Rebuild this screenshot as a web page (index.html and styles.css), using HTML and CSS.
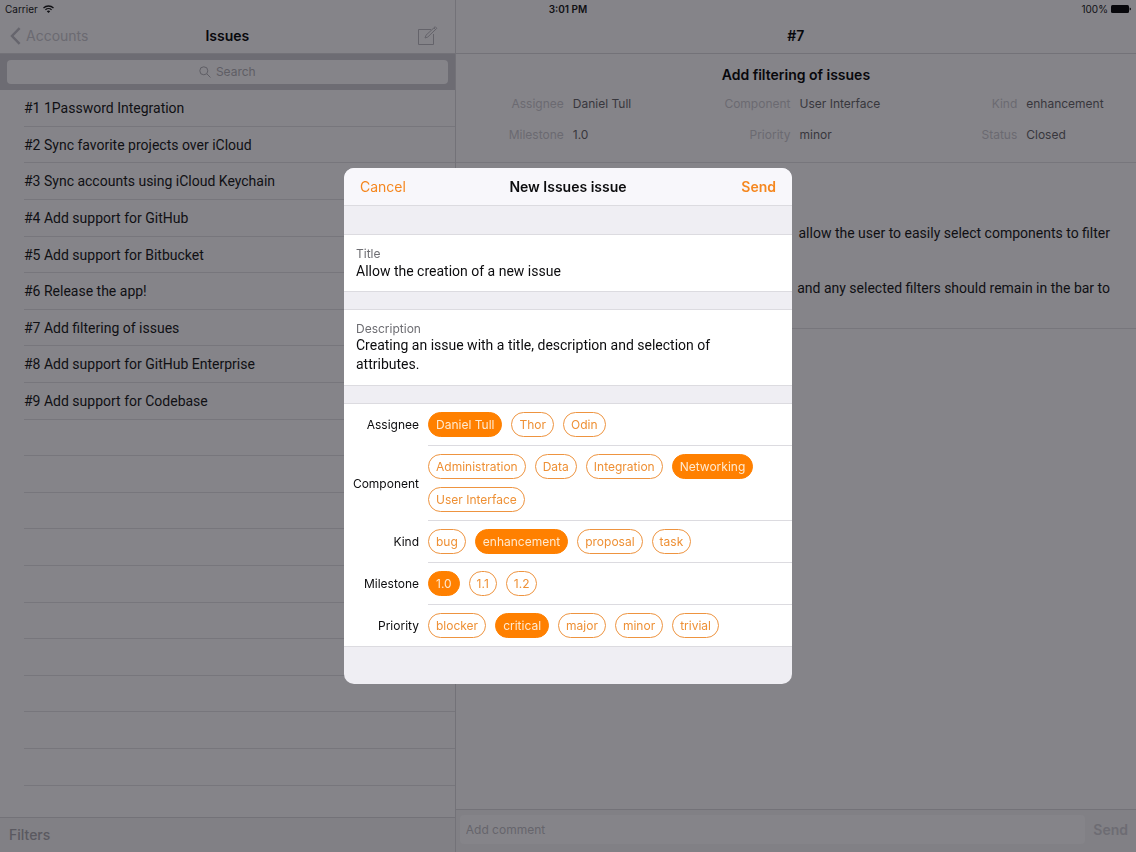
FILE: index.html
```html
<!DOCTYPE html>
<html lang="en">
<head>
    <meta charset="UTF-8">
    <meta name="viewport" content="width=device-width, initial-scale=1.0">
    <title>Issues</title>
    <link rel="stylesheet" href="styles.css">
</head>
<body>
    <div class="app">
        <!-- Status Bar -->
        <div class="status-bar">
            <span class="carrier">Carrier
                <svg width="11" height="8" viewBox="0 0 22 16" fill="none" stroke="#101014" stroke-width="2.6">
                    <path d="M1 6a14.5 14.5 0 0 1 20 0"/>
                    <path d="M4.8 9.8a9 9 0 0 1 12.4 0"/>
                    <path d="M11 16l-3.4-3.6a5 5 0 0 1 6.8 0z" fill="#101014" stroke="none"/>
                </svg>
            </span>
            <strong>3:01 PM</strong>
            <span class="battery">100%
                <svg width="20" height="8" viewBox="0 0 20 8" fill="#08080c">
                    <rect width="18" height="8" rx="1.5"/>
                    <path d="M18.6 2.6q1.4.3 1.4 1.4t-1.4 1.4z"/>
                </svg>
            </span>
        </div>

        <!-- Issue List -->
        <section class="sidebar">
            <header class="navbar">
                <a class="back" href="#">
                    <svg width="11" height="18" viewBox="0 0 11 18" fill="none" stroke="#66656d" stroke-width="2.4">
                        <path d="M9.6 1.2L2 9l7.6 7.8"/>
                    </svg>
                    Accounts
                </a>
                <h1>Issues</h1>
                <button class="compose" aria-label="New issue">
                    <svg width="20" height="20" viewBox="0 0 20 20" fill="none" stroke="#64636a" stroke-width="1">
                        <path d="M13 3.500H.500v15h15V8"/>
                        <path d="M7 12l1-2.800L17.200.700l1.600 1.600-9 8.700zM16 2l1.600 1.600"/>
                    </svg>
                </button>
            </header>
            <div class="search-bar">
                <label class="search">
                    <svg width="12" height="12" viewBox="0 0 12 12" fill="none" stroke="#5f5e65">
                        <circle cx="4.800" cy="4.800" r="4"/>
                        <path d="M7.800 7.800l3.700 3.700"/>
                    </svg>
                    <input type="text" placeholder="Search" aria-label="Search">
                </label>
            </div>
            <ul class="issues">
                <li>#1 1Password Integration</li>
                <li>#2 Sync favorite projects over iCloud</li>
                <li>#3 Sync accounts using iCloud Keychain</li>
                <li>#4 Add support for GitHub</li>
                <li>#5 Add support for Bitbucket</li>
                <li>#6 Release the app!</li>
                <li>#7 Add filtering of issues</li>
                <li>#8 Add support for GitHub Enterprise</li>
                <li>#9 Add support for Codebase</li>
                <li></li>
                <li></li>
                <li></li>
                <li></li>
                <li></li>
                <li></li>
                <li></li>
                <li></li>
                <li></li>
                <li></li>
            </ul>
            <footer class="toolbar">
                <button class="filters">Filters</button>
            </footer>
        </section>

        <!-- Issue Detail -->
        <main class="detail">
            <header class="navbar">
                <h1>#7</h1>
            </header>
            <div class="summary">
                <h2>Add filtering of issues</h2>
                <dl class="attributes">
                    <div><dt>Assignee</dt><dd>Daniel Tull</dd></div>
                    <div><dt>Component</dt><dd>User Interface</dd></div>
                    <div><dt>Kind</dt><dd>enhancement</dd></div>
                    <div><dt>Milestone</dt><dd>1.0</dd></div>
                    <div><dt>Priority</dt><dd>minor</dd></div>
                    <div><dt>Status</dt><dd>Closed</dd></div>
                </dl>
            </div>
            <div class="content">
                <p>allow the user to easily select components to filter</p>
                <p>and any selected filters should remain in the bar to</p>
            </div>
            <form class="comment-bar">
                <input type="text" placeholder="Add comment" aria-label="Add comment">
                <button type="button">Send</button>
            </form>
        </main>
    </div>

    <!-- New Issue Dialog -->
    <div class="overlay">
        <form class="dialog" role="dialog" aria-labelledby="dialog-title">
            <header class="dialog-header">
                <button type="button">Cancel</button>
                <h2 id="dialog-title">New Issues issue</h2>
                <button type="button" class="send">Send</button>
            </header>
            <div class="field">
                <label for="title">Title</label>
                <input type="text" id="title" value="Allow the creation of a new issue">
            </div>
            <div class="field">
                <label for="description">Description</label>
                <textarea id="description" rows="2">Creating an issue with a title, description and selection of attributes.</textarea>
            </div>
            <div class="options">
                <div class="option" role="radiogroup" aria-labelledby="assignee">
                    <span class="option-name" id="assignee">Assignee</span>
                    <div class="chips">
                        <label><input type="radio" name="assignee" checked>Daniel Tull</label>
                        <label><input type="radio" name="assignee">Thor</label>
                        <label><input type="radio" name="assignee">Odin</label>
                    </div>
                </div>
                <div class="option" role="radiogroup" aria-labelledby="component">
                    <span class="option-name" id="component">Component</span>
                    <div class="chips">
                        <label><input type="radio" name="component">Administration</label>
                        <label><input type="radio" name="component">Data</label>
                        <label><input type="radio" name="component">Integration</label>
                        <label><input type="radio" name="component" checked>Networking</label>
                        <label><input type="radio" name="component">User Interface</label>
                    </div>
                </div>
                <div class="option" role="radiogroup" aria-labelledby="kind">
                    <span class="option-name" id="kind">Kind</span>
                    <div class="chips">
                        <label><input type="radio" name="kind">bug</label>
                        <label><input type="radio" name="kind" checked>enhancement</label>
                        <label><input type="radio" name="kind">proposal</label>
                        <label><input type="radio" name="kind">task</label>
                    </div>
                </div>
                <div class="option" role="radiogroup" aria-labelledby="milestone">
                    <span class="option-name" id="milestone">Milestone</span>
                    <div class="chips">
                        <label><input type="radio" name="milestone" checked>1.0</label>
                        <label><input type="radio" name="milestone">1.1</label>
                        <label><input type="radio" name="milestone">1.2</label>
                    </div>
                </div>
                <div class="option" role="radiogroup" aria-labelledby="priority">
                    <span class="option-name" id="priority">Priority</span>
                    <div class="chips">
                        <label><input type="radio" name="priority">blocker</label>
                        <label><input type="radio" name="priority" checked>critical</label>
                        <label><input type="radio" name="priority">major</label>
                        <label><input type="radio" name="priority">minor</label>
                        <label><input type="radio" name="priority">trivial</label>
                    </div>
                </div>
            </div>
        </form>
    </div>
</body>
</html>
```
FILE: styles.css
```css
* {
    box-sizing: border-box;
}

body {
    margin: 0;
    background-color: #858489;
    color: #101014;
    font-family: Inter, "Liberation Sans", sans-serif;
    font-size: 14px;
    line-height: 18px;
}

h1, h2, p, ul, dl, dd {
    margin: 0;
    padding: 0;
}

h1, h2 {
    font-size: 14px;
    font-weight: 600;
    text-align: center;
}

button, input, textarea {
    font: inherit;
    color: inherit;
    background: none;
    border: none;
    margin: 0;
    padding: 0;
    outline: none;
}

button {
    cursor: pointer;
}

svg {
    display: block;
}

.app {
    position: relative;
    display: grid;
    grid-template-columns: 67fr 100fr;
    height: 100vh;
    overflow: hidden;
}

/* Status Bar */
.status-bar {
    position: absolute;
    top: 0;
    left: 0;
    right: 0;
    display: grid;
    grid-template-columns: 1fr auto 1fr;
    padding: 0 5px;
    font-size: 10px;
}

.status-bar strong {
    font-weight: 600;
}

.carrier, .battery {
    display: flex;
    align-items: center;
    gap: 5px;
}

.battery {
    justify-content: flex-end;
    gap: 3px;
}

/* Panes */
.sidebar, .detail {
    display: flex;
    flex-direction: column;
    min-width: 0;
    min-height: 0;
    padding-top: 18px;
}

.sidebar {
    border-right: 1px solid #737278;
}

.navbar {
    display: grid;
    grid-template-columns: 1fr auto 1fr;
    align-items: center;
    flex: none;
    height: 36px;
    padding: 0 10px;
    border-bottom: 1px solid #737278;
    color: #08080c;
}

.navbar h1 {
    grid-column: 2;
}

.back {
    display: flex;
    align-items: center;
    gap: 5px;
    color: #6b6a71;
    text-decoration: none;
}

.compose {
    justify-self: end;
    margin-right: 7px;
}

/* Search */
.search-bar {
    flex: none;
    padding: 6px 7px;
    background-color: #6d6c73;
}

.search {
    display: flex;
    align-items: center;
    justify-content: center;
    gap: 5px;
    height: 24px;
    border-radius: 4px;
    background-color: #858489;
    font-size: 12px;
}

.search input {
    width: 40px;
}

.search input::placeholder {
    color: #5f5e65;
    opacity: 1;
}

/* Issue List */
.issues {
    flex: 1;
    min-height: 0;
    overflow: hidden;
    padding-left: 24px;
    list-style: none;
}

.issues li {
    display: flex;
    align-items: center;
    height: 37px;
    border-bottom: 1px solid #77767c;
}

.issues li:nth-child(5n + 2), .issues li:nth-child(5n) {
    height: 36px;
}

.issues, .content, .field input, .field textarea {
    font-family: Roboto, "Liberation Sans", sans-serif;
}

.toolbar {
    flex: none;
    padding: 8px 9px;
    border-top: 1px solid #737278;
    background-color: #818085;
}

.filters {
    color: #5a5960;
    font-weight: 500;
}

/* Issue Detail */
.summary {
    flex: none;
    padding: 12px 0 18px;
    border-bottom: 1px solid #77767c;
}

.summary h2 {
    color: #08080c;
}

.attributes {
    display: grid;
    grid-template-columns: repeat(3, 1fr);
    row-gap: 13px;
    margin-top: 11px;
    font-size: 12px;
}

.attributes div {
    display: grid;
    grid-template-columns: 108px 1fr;
    column-gap: 9px;
    white-space: nowrap;
}

.attributes dt {
    color: #6b6a71;
    text-align: right;
}

.attributes dd {
    color: #38373d;
}

.content {
    display: grid;
    row-gap: 37px;
    padding: 61px 26px 31px;
    border-bottom: 1px solid #77767c;
    text-align: right;
}

.comment-bar {
    display: flex;
    gap: 8px;
    margin-top: auto;
    padding: 5px 8px 8px 4px;
    border-top: 1px solid #737278;
    background-color: #818085;
}

.comment-bar input {
    flex: 1;
    min-width: 0;
    height: 29px;
    padding: 0 6px;
    border-radius: 4px;
    background-color: #858489;
    font-size: 12px;
}

.comment-bar input::placeholder {
    color: #66656c;
    opacity: 1;
}

.comment-bar button {
    color: #6d6c73;
    font-weight: 600;
}

/* New Issue Dialog */
.overlay {
    position: fixed;
    inset: 0;
    display: flex;
    align-items: center;
    justify-content: center;
}

.dialog {
    width: 448px;
    max-width: 100%;
    padding-bottom: 37px;
    border-radius: 10px;
    background-color: #efeef3;
    color: #0c0c0e;
    overflow: hidden;
}

.dialog-header {
    display: grid;
    grid-template-columns: 1fr auto 1fr;
    align-items: center;
    height: 38px;
    margin-bottom: 28px;
    padding: 0 16px;
    border-bottom: 1px solid #dcdbe0;
    background-color: #f8f7fb;
}

.dialog-header button {
    justify-self: start;
    color: #f5871f;
}

.dialog-header .send {
    justify-self: end;
    font-weight: 600;
}

.field {
    display: flex;
    flex-direction: column;
    margin-bottom: 17px;
    padding: 11px 24px 11px 12px;
    border-top: 1px solid #dcdbe0;
    border-bottom: 1px solid #dcdbe0;
    background-color: #fff;
}

.field label {
    color: #6d6d72;
    font-size: 12px;
    line-height: 15px;
}

.field input {
    height: 19px;
}

.field textarea {
    line-height: 19px;
    resize: none;
    overflow: hidden;
}

.options {
    border-top: 1px solid #dcdbe0;
    border-bottom: 1px solid #dcdbe0;
    background-color: #fff;
}

.option {
    display: grid;
    grid-template-columns: 75px 1fr;
    column-gap: 9px;
    align-items: center;
}

.option-name {
    text-align: right;
    font-size: 12px;
}

.chips {
    display: flex;
    flex-wrap: wrap;
    gap: 8px 9px;
    padding: 8px 0;
    border-bottom: 1px solid #dcdbe0;
}

.option:last-child .chips {
    border-bottom: none;
}

.chips label {
    position: relative;
    height: 25px;
    padding: 0 7px;
    border: 1px solid #ee9440;
    border-radius: 13px;
    color: #ee9035;
    font-size: 12px;
    line-height: 23px;
    cursor: pointer;
}

.chips label:has(input:checked) {
    border-color: #ff8000;
    background-color: #ff8000;
    color: #ffe9cf;
}

.chips input {
    position: absolute;
    opacity: 0;
    appearance: none;
}
```
